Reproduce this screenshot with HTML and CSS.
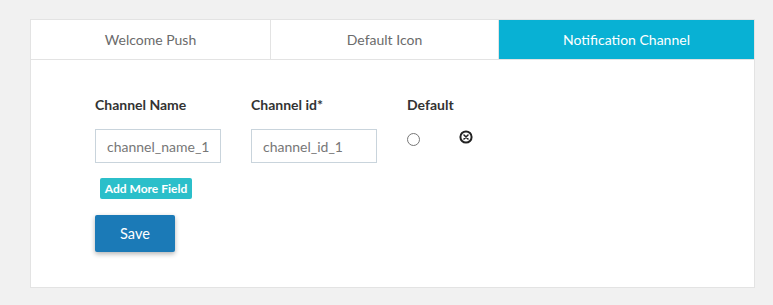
FILE: index.html
```html
<!DOCTYPE html>
<html lang="en">
<head>
  <meta charset="UTF-8">
  <meta name="viewport" content="width=device-width, initial-scale=1.0">
  <title>Push Settings</title>
  <link rel="stylesheet" href="styles.css">
</head>
<body>
  <div class="card">
    <div class="tabs">
      <div class="tab tab-welcome">Welcome Push</div>
      <div class="tab tab-icon">Default Icon</div>
      <div class="tab tab-channel active">Notification Channel</div>
    </div>
    <div class="panel">
      <div class="row labels">
        <div class="col col-name">Channel Name</div>
        <div class="col col-id">Channel id*</div>
        <div class="col col-default">Default</div>
      </div>
      <div class="row fields">
        <div class="col col-name"><input type="text" placeholder="channel_name_1"></div>
        <div class="col col-id"><input type="text" placeholder="channel_id_1"></div>
        <div class="col col-default">
          <span class="radio"></span>
          <svg class="remove" width="14" height="14" viewBox="0 0 14 14">
            <circle cx="7" cy="7" r="5.6" fill="none" stroke="#222" stroke-width="2"/>
            <path d="M5 5 L9 9 M9 5 L5 9" stroke="#222" stroke-width="1.6" stroke-linecap="round"/>
          </svg>
        </div>
      </div>
      <button class="btn-add">Add More Field</button>
      <button class="btn-save">Save</button>
    </div>
  </div>
</body>
</html>
```

FILE: styles.css
```css
* {
    margin: 0;
    padding: 0;
    box-sizing: border-box;
    font-family: Lato, 'Open Sans', sans-serif;
}

body {
    background: #f1f1f1;
    padding: 19px 18px 0 30px;
}

.card {
    width: 725px;
    height: 269px;
    background: #fff;
    border: 1px solid #e3e3e3;
}

.tabs {
    display: flex;
    height: 40px;
    border-bottom: 1px solid #e3e3e3;
}

.tab {
    display: flex;
    align-items: center;
    justify-content: center;
    font-size: 14px;
    color: #6b6b6b;
    border-right: 1px solid #e3e3e3;
}

.tab-welcome { width: 240px; }
.tab-icon { width: 228px; }

.tab-channel {
    flex: 1;
    border-right: none;
}

.tab.active {
    background: #08b1d4;
    color: #fff;
}

.panel {
    padding: 36px 0 0 64px;
}

.row {
    display: flex;
}

.col-name, .col-id {
    width: 156px;
}

.labels {
    font-size: 14px;
    font-weight: bold;
    color: #333;
    height: 20px;
}

.fields {
    margin-top: 13px;
    height: 34px;
}

.fields input {
    width: 126px;
    height: 34px;
    border: 1px solid #c9d4dc;
    padding: 0 11px;
    font-size: 14px;
    color: #555;
    outline: none;
}

.fields input::placeholder {
    color: #777;
}

.col-default {
    display: flex;
    align-items: flex-start;
}

.radio {
    width: 13px;
    height: 13px;
    margin-top: 4px;
    border: 1px solid #777;
    border-radius: 50%;
}

.remove {
    margin-left: 39px;
    margin-top: 1px;
}

.btn-add {
    display: block;
    margin: 15px 0 0 5px;
    width: 92px;
    height: 21px;
    border: none;
    border-radius: 2px;
    background: #2bbfca;
    color: #fff;
    font-size: 12px;
    font-weight: bold;
}

.btn-save {
    display: block;
    margin-top: 16px;
    width: 80px;
    height: 37px;
    border: none;
    border-radius: 2px;
    background: #1b7ab7;
    color: #fff;
    font-size: 14.5px;
    box-shadow: 0 2px 5px rgba(0, 0, 0, 0.3);
}
```
